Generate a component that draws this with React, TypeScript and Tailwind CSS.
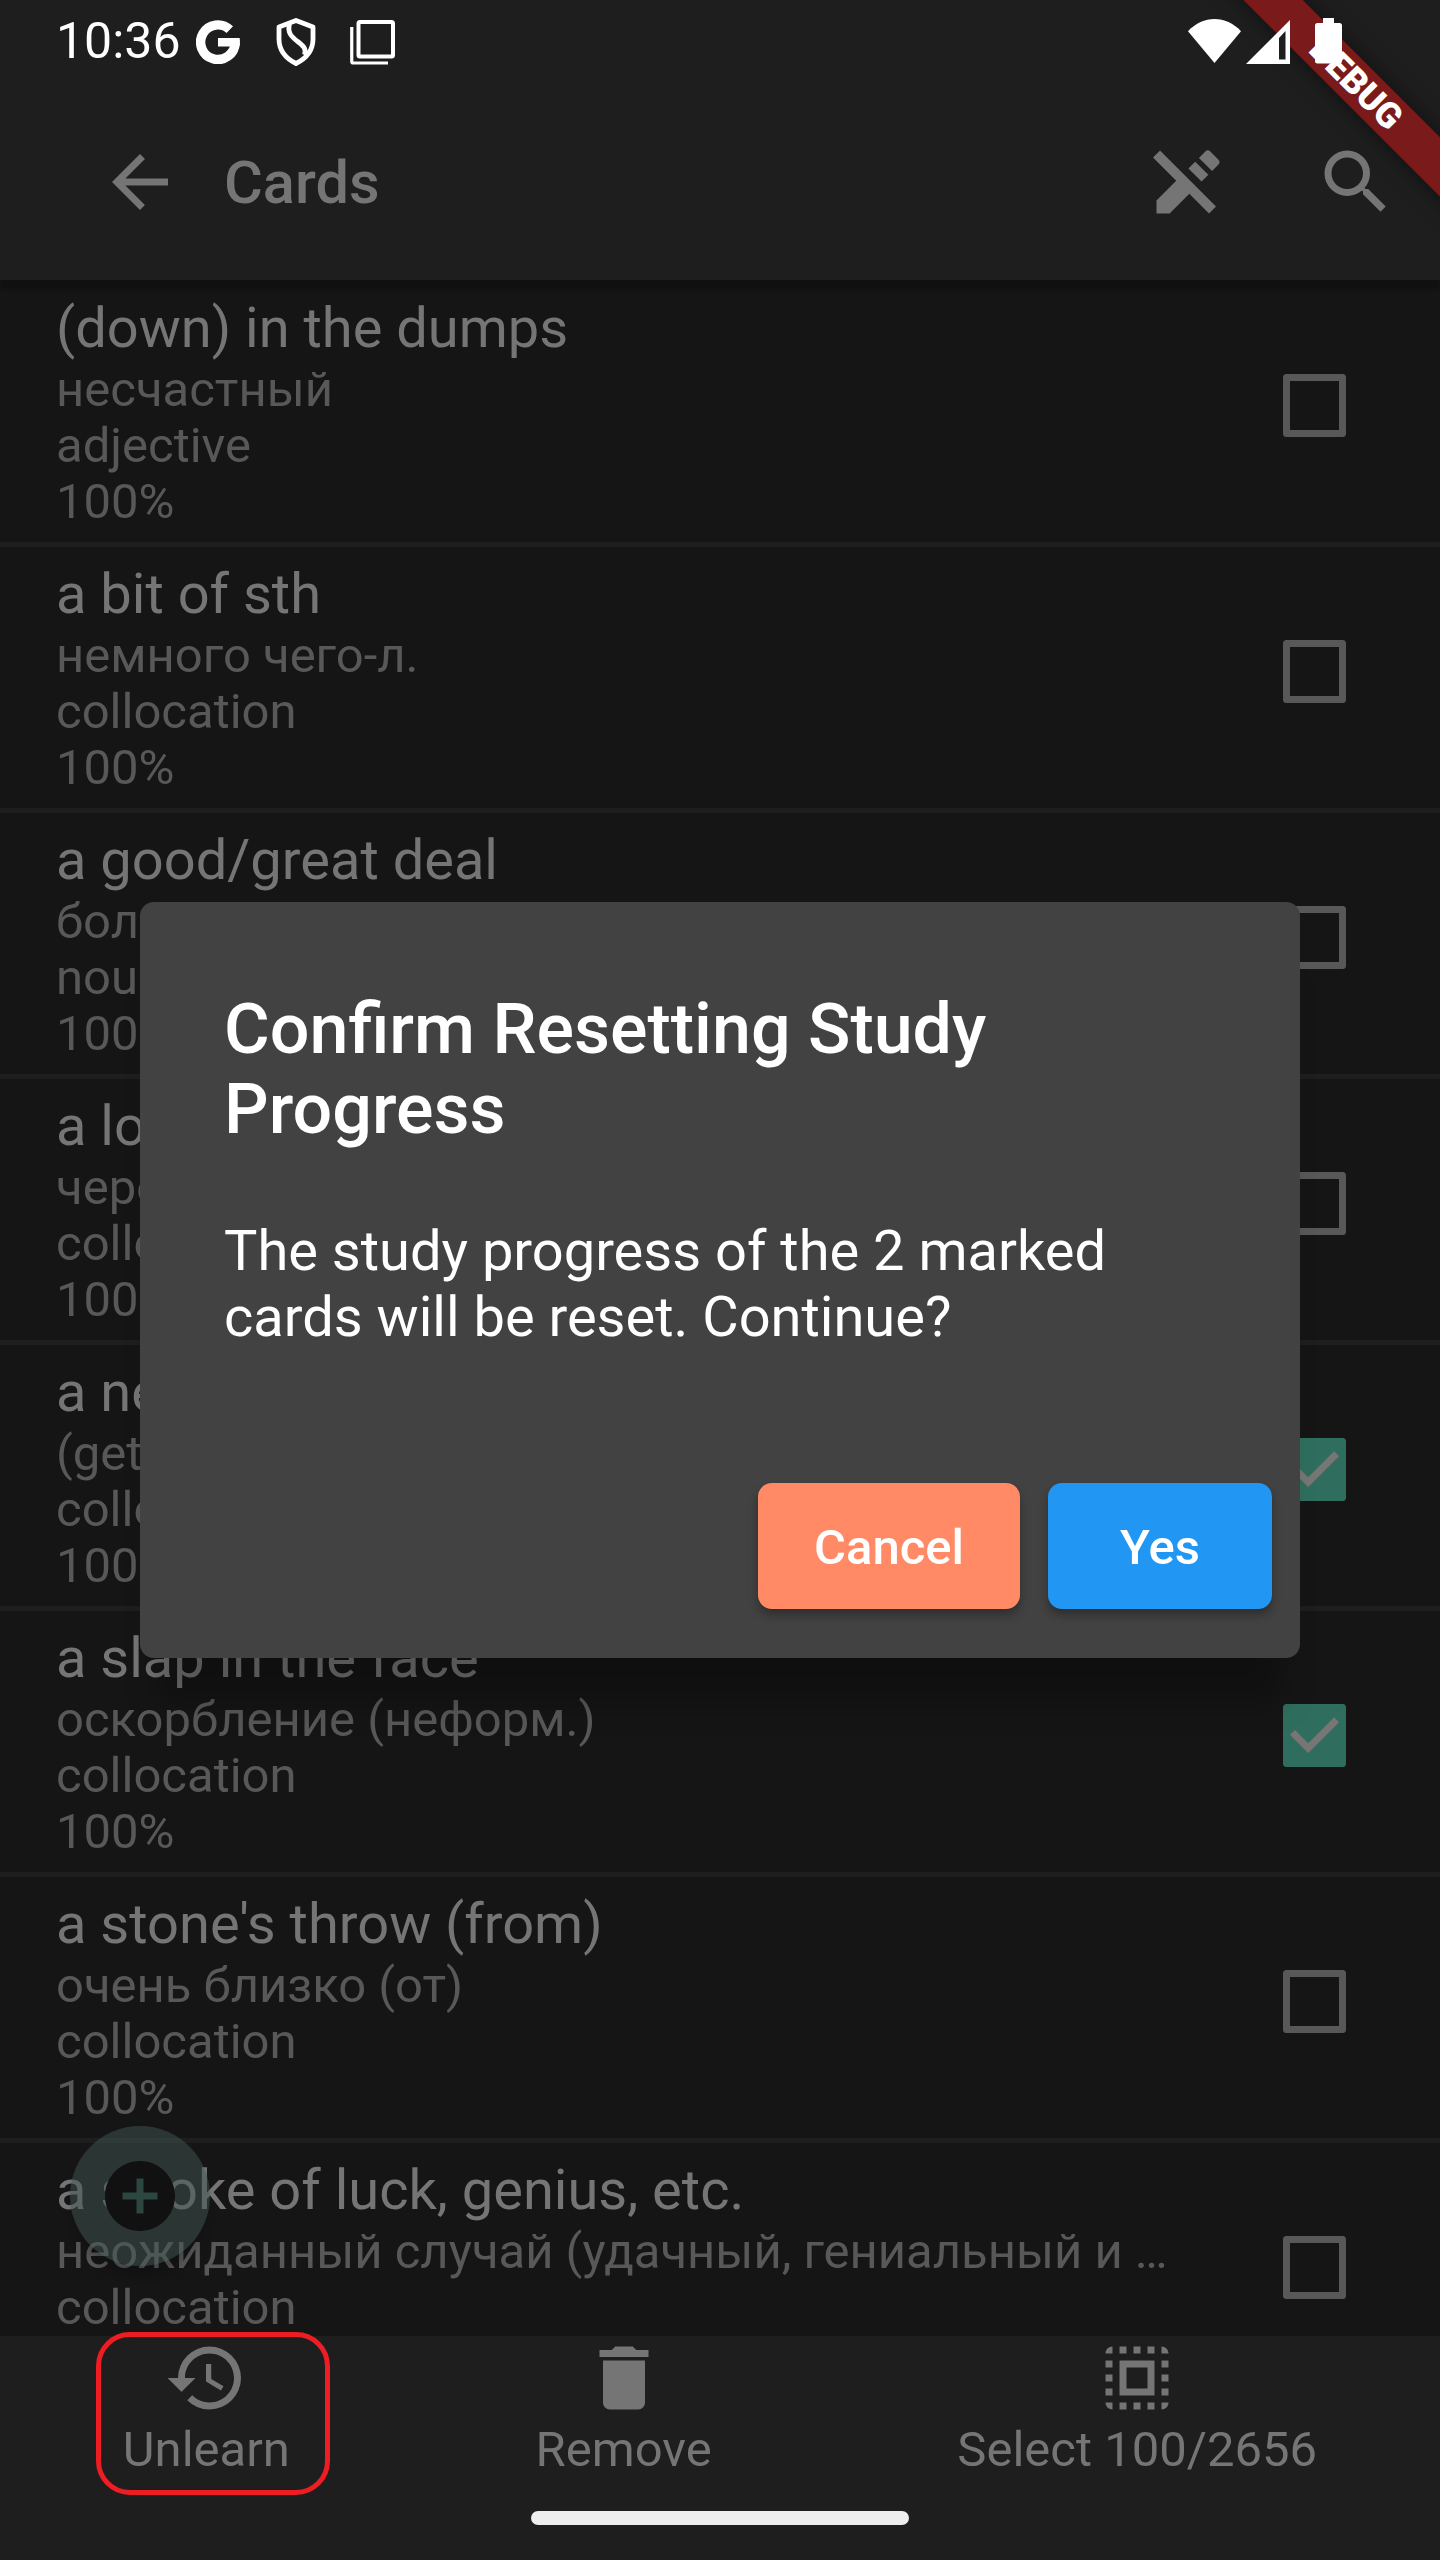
import React from "react";
import { MdArrowBack, MdSearch, MdHistory, MdDelete, MdSelectAll, MdAddCircle } from "react-icons/md";

type Card = { title: string; lines: string[]; checked?: boolean };

const cards: Card[] = [
  { title: "(down) in the dumps", lines: ["несчастный", "adjective", "100%"] },
  { title: "a bit of sth", lines: ["немного чего-л.", "collocation", "100%"] },
  { title: "a good/great deal", lines: ["большое количество", "noun", "100%"] },
  { title: "a long way", lines: ["через", "collocation", "100%"] },
  { title: "a new lease", lines: ["(get)", "collocation", "100%"], checked: true },
  { title: "a slap in the face", lines: ["оскорбление (неформ.)", "collocation", "100%"], checked: true },
  { title: "a stone's throw (from)", lines: ["очень близко (от)", "collocation", "100%"] },
  { title: "a stroke of luck, genius, etc.", lines: ["неожиданный случай (удачный, гениальный и …", "collocation", "100%"] },
];

function Checkbox({ checked }: { checked?: boolean }) {
  if (!checked) {
    return <span className="h-[63px] w-[63px] shrink-0 rounded-[3.5px] border-[7px] border-[#585858]" />;
  }
  return (
    <span className="h-[63px] w-[63px] shrink-0 rounded-[3.5px] bg-[#2f6e5e]">
      <svg viewBox="0 0 63 63" className="h-full w-full" fill="none">
        <path d="M9.45 28.35 25.2 44.1 53.55 15.75" stroke="#787575" strokeWidth="7" />
      </svg>
    </span>
  );
}

function CardRow({ card }: { card: Card }) {
  return (
    <div className="flex h-[266px] shrink-0 items-start justify-between border-b-[5px] border-[#1e1e1e] pt-[14px] pr-[94px] pl-[56px]">
      <div className="whitespace-nowrap">
        <div className="pb-px text-[56px] leading-[66px] text-[#757575]">{card.title}</div>
        {card.lines.map((line, i) => (
          <div key={i} className="text-[49px] leading-[56px] text-[#585858]">
            {line}
          </div>
        ))}
      </div>
      <div className="flex pt-[79px]">
        <Checkbox checked={card.checked} />
      </div>
    </div>
  );
}

function StatusBar() {
  return (
    <div className="absolute inset-x-0 top-0 z-30 flex h-[84px] items-start justify-between pr-[98px] pl-[56px] text-white">
      <div className="flex items-start">
        <span className="mt-[13px] w-[140px] text-[50px] leading-[57px]">10:36</span>
        <svg className="mt-[20px] h-[44px] w-[44px]" viewBox="0 0 44 44" fill="none">
          <path d="M33.8 9.6A17.3 17.3 0 1 0 39.2 23" stroke="currentColor" strokeWidth="9.4" />
          <path d="M22 18h21.6c.6 3.200 .4 6-.3 8.500H22z" fill="currentColor" />
        </svg>
        <svg className="mt-[18px] ml-[36px] h-[48px] w-[40px]" viewBox="0 0 40 48" fill="none" stroke="currentColor" strokeWidth="4.800" strokeLinejoin="round">
          <path d="M20 2.500 37 9V21C37 31 31 40 20 45.500 9 40 3 31 3 21V9Z" />
          <path d="M13.500 6C11 15 16 19 21 23 27 27.500 31 31 28.500 37" />
        </svg>
        <svg className="mt-[20px] ml-[34px] h-[45px] w-[45px]" viewBox="0 0 45 45" fill="none" stroke="currentColor">
          <rect x="8.500" y="2" width="34.500" height="34.500" rx="1.500" strokeWidth="4" />
          <path d="M1.750 7v34.500q0 1.500 1.500 1.500H38" strokeWidth="3.200" />
        </svg>
      </div>
      <div className="flex items-start">
        <svg className="mt-[19px] h-[44px] w-[53px]" viewBox="0 0 53 44" fill="currentColor">
          <path d="M26.500 44 0 12.300C15-4 38-4 53 12.300Z" />
        </svg>
        <svg className="mt-[20px] ml-[5px] h-[44px] w-[44px]" viewBox="0 0 44 44">
          <path d="M0 44 44 0V44Z" fill="currentColor" />
          <path d="M33 18 39.500 11V39.500H33Z" fill="#1e1e1e" />
        </svg>
        <svg className="mt-[18px] ml-[25px] h-[46px] w-[27px]" viewBox="0 0 27 46" fill="currentColor">
          <path d="M8 0H19V5H24.500Q27 5 27 7.500V43Q27 45.500 24.500 45.500H2.500Q0 45.500 0 43V7.500Q0 5 2.500 5H8Z" />
        </svg>
      </div>
    </div>
  );
}

function DebugBanner() {
  return (
    <div className="absolute top-0 right-0 z-20 h-[300px] w-[300px] overflow-hidden">
      <div className="absolute top-[62.4px] left-[16.4px] flex h-[42.4px] w-[400px] rotate-45 items-center justify-center bg-[#7b1a1b] text-[35.7px] leading-[42px] font-black text-white shadow-[0_0_21px_rgba(0,0,0,0.5)]">
        DEBUG
      </div>
    </div>
  );
}

function Header() {
  return (
    <header className="relative z-10 flex h-[280px] shrink-0 items-end bg-[#1e1e1e] text-[#757575] shadow-[0_9px_4px_rgba(0,0,0,0.22)]">
      <div className="flex h-[196px] w-full items-center pl-[98px]">
        <MdArrowBack className="h-[84px] w-[84px]" />
        <span className="ml-[42px] flex-1 pt-[2px] text-[59.5px] leading-[70px] font-medium">Cards</span>
        <div className="flex w-[168px] justify-center">
          <svg className="h-[84px] w-[84px]" viewBox="0 0 24 24" fill="currentColor">
            <path d="M12.126 8.125l1.937-1.937 3.747 3.747-1.937 1.938zM20.710 5.630l-2.340-2.340a1 1 0 0 0-1.410 0l-1.830 1.830 3.750 3.750L20.710 7a1 1 0 0 0 0-1.370zM2 5l6.630 6.630L3 17.250V21h3.750l5.630-5.620L18 21l2-2L4 3 2 5z" />
          </svg>
        </div>
        <div className="flex w-[168px] justify-center">
          <MdSearch className="h-[84px] w-[84px]" />
        </div>
      </div>
    </header>
  );
}

function BottomAction({ icon, label, marked }: { icon: React.ReactNode; label: string; marked?: boolean }) {
  return (
    <div className="relative flex flex-col items-center">
      {icon}
      <span className="pt-px text-[49px] leading-[58px]">{label}</span>
      {marked && (
        <span className="absolute top-[-4px] left-1/2 h-[163px] w-[234px] translate-x-[-110px] rounded-[34px] border-[5px] border-[#ee1c23]" />
      )}
    </div>
  );
}

function ConfirmDialog() {
  return (
    <div className="absolute inset-0 z-20 flex items-center justify-center">
      <div className="flex h-[756px] w-[1160px] flex-col rounded-[14px] bg-[#424242] text-white shadow-[0_62px_30px_-18px_rgba(0,0,0,0.25)]">
        <h2 className="px-[84px] pt-[87px] text-[70px] leading-[80px] font-medium">
          Confirm Resetting Study
          <br />
          Progress
        </h2>
        <p className="px-[84px] pt-[69px] text-[56px] leading-[66px]">
          The study progress of the 2 marked
          <br />
          cards will be reset. Continue?
        </p>
        <div className="mt-auto flex justify-end gap-[28px] pr-[28px] pb-[49px] text-[49px] font-medium">
          <button className="h-[126px] w-[262px] rounded-[14px] bg-[#ff8a65] pt-[3px] shadow-[0_6px_10px_rgba(0,0,0,0.3)]">Cancel</button>
          <button className="h-[126px] w-[224px] rounded-[14px] bg-[#2196f3] pt-[3px] shadow-[0_6px_10px_rgba(0,0,0,0.3)]">Yes</button>
        </div>
      </div>
    </div>
  );
}

export default function App() {
  return (
    <div className="relative flex h-[2560px] w-[1440px] flex-col overflow-hidden bg-[#151515] font-[Roboto,sans-serif]">
      <StatusBar />
      <DebugBanner />
      <Header />
      <main className="flex min-h-0 flex-1 flex-col overflow-hidden pt-px">
        {cards.map((card) => (
          <CardRow key={card.title} card={card} />
        ))}
      </main>
      <div className="absolute top-[2126px] left-[70px] flex h-[140px] w-[140px] items-center justify-center rounded-full bg-[rgba(66,88,84,0.5)] shadow-[0_14px_10px_-4px_rgba(0,0,0,0.2)]">
        <span className="absolute h-[40px] w-[40px] bg-[#2c4640]" />
        <MdAddCircle className="relative h-[84px] w-[84px] text-[#111111]" />
      </div>
      <footer className="relative h-[224px] shrink-0 bg-[#1e1e1e] text-[#757575]">
        <div className="flex justify-around">
          <BottomAction icon={<MdHistory className="h-[84px] w-[84px]" />} label="Unlearn" marked />
          <BottomAction icon={<MdDelete className="h-[84px] w-[84px]" />} label="Remove" />
          <BottomAction icon={<MdSelectAll className="h-[84px] w-[84px]" />} label="Select 100/2656" />
        </div>
        <div className="mx-auto mt-[32px] h-[14px] w-[378px] rounded-full bg-[#eeeeee]" />
      </footer>
      <ConfirmDialog />
    </div>
  );
}
